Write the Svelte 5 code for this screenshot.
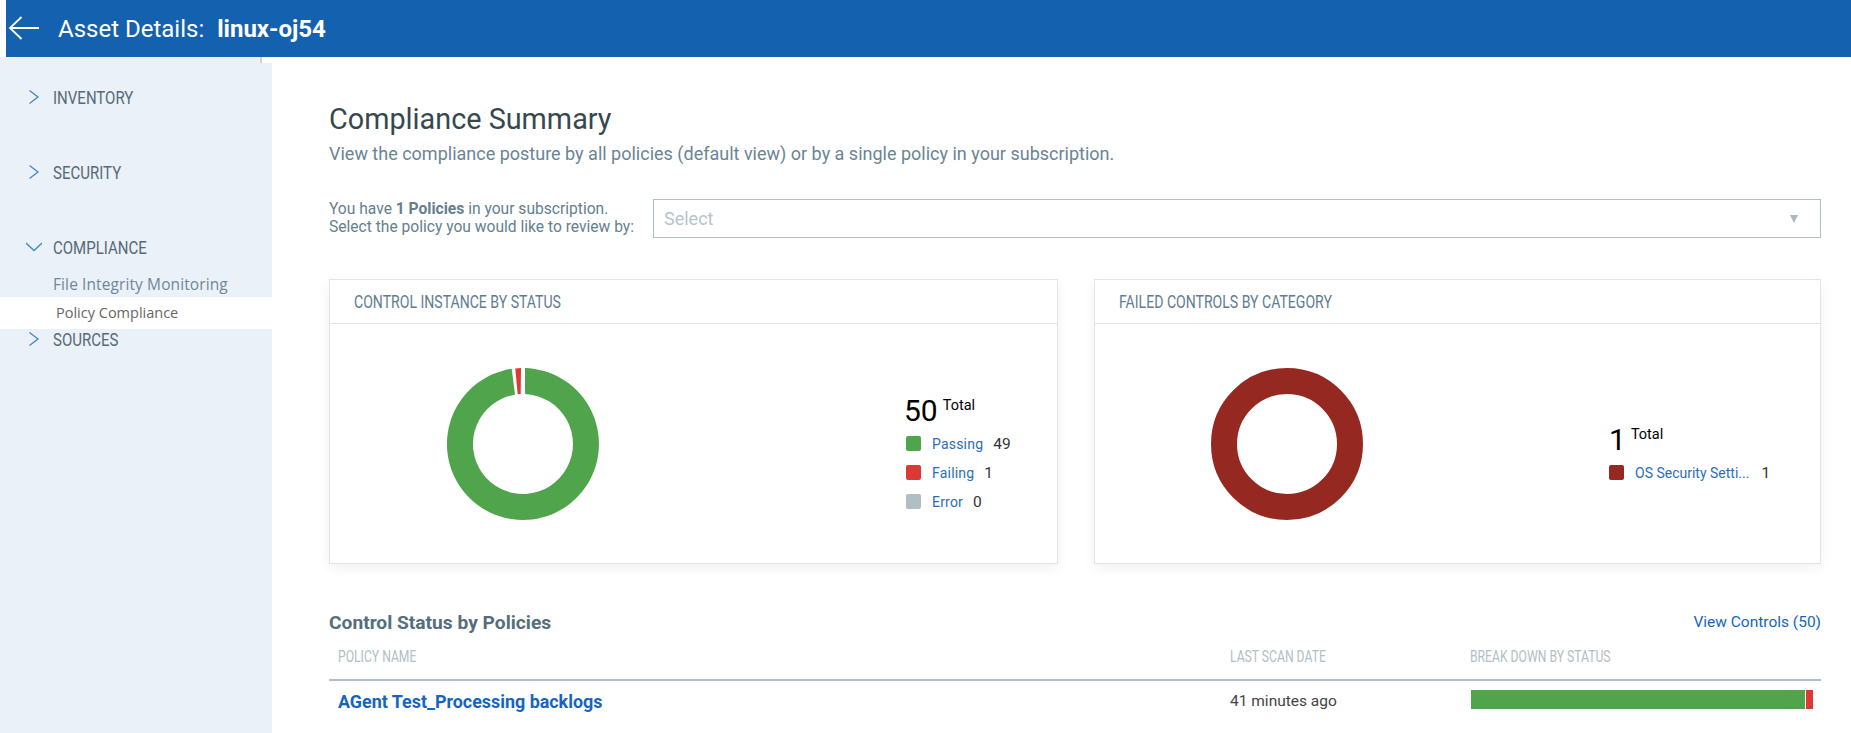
<script>
	const navTop = ['INVENTORY', 'SECURITY'];

	const statusLegend = [
		{ label: 'Passing', count: 49, color: '#50a44c' },
		{ label: 'Failing', count: 1, color: '#db3a34' },
		{ label: 'Error', count: 0, color: '#b0bec5' },
	];
	const categoryLegend = [{ label: 'OS Security Setti...', count: 1, color: '#952820' }];
</script>

{#snippet chevron(open)}
	<svg class="chevron" class:open width="16" height="16" viewBox="0 0 16 16">
		{#if open}
			<path d="M0 4 L8 11.5 L16 4" />
		{:else}
			<path d="M3.5 1.5 L12 8 L3.5 14.5" />
		{/if}
	</svg>
{/snippet}

<header class="topbar">
	<svg class="back" width="32" height="26" viewBox="0 0 32 26">
		<path d="M31 12 H2 M13.5 1 L2 12 L13.5 23" />
	</svg>
	<span class="topbar-title">Asset Details:</span>
	<span class="topbar-host">linux-oj54</span>
</header>

<div class="layout">
	<aside class="sidebar">
		<div class="grip"></div>
		{#each navTop as item}
			<div class="nav-row spaced">{@render chevron(false)}<span class="narrow">{item}</span></div>
		{/each}
		<div class="nav-row">{@render chevron(true)}<span class="narrow">COMPLIANCE</span></div>
		<div class="sub-item">File Integrity Monitoring</div>
		<div class="sub-item active">Policy Compliance</div>
		<div class="nav-row last">{@render chevron(false)}<span class="narrow">SOURCES</span></div>
	</aside>

	<main class="content">
		<h1 class="title">Compliance Summary</h1>
		<p class="subtitle">View the compliance posture by all policies (default view) or by a single policy in your subscription.</p>

		<div class="policy-select">
			<div class="policy-text">
				You have <b>1 Policies</b> in your subscription.<br />
				Select the policy you would like to review by:
			</div>
			<div class="select">
				<span>Select</span>
				<i class="caret"></i>
			</div>
		</div>

		<div class="cards">
			<section class="card">
				<h2 class="card-title"><span class="narrow">CONTROL INSTANCE BY STATUS</span></h2>
				<div class="card-body">
					<svg class="donut" width="152" height="152" viewBox="-76 -76 152 152">
						<path fill="#50a44c" d="M2 -75.97 A76 76 0 1 1 -11.3 -75.16 L-8 -49.36 A50 50 0 1 0 2 -49.96 Z" />
						<path fill="#db3a34" d="M-7.7 -75.6 A76 76 0 0 1 -2 -75.97 L-2.3 -49.9 A50 50 0 0 0 -5.3 -49.7 Z" />
					</svg>
					<div class="legend status">
						<div class="total"><span class="total-num">50</span><span class="total-label">Total</span></div>
						{#each statusLegend as row}
							<div class="legend-row">
								<i class="swatch" style:background={row.color}></i>
								<span class="legend-label">{row.label}</span>
								<span class="legend-count">{row.count}</span>
							</div>
						{/each}
					</div>
				</div>
			</section>

			<section class="card">
				<h2 class="card-title"><span class="narrow">FAILED CONTROLS BY CATEGORY</span></h2>
				<div class="card-body">
					<svg class="donut" width="152" height="152" viewBox="-76 -76 152 152">
						<circle r="63" fill="none" stroke="#952820" stroke-width="26" />
					</svg>
					<div class="legend category">
						<div class="total"><span class="total-num">1</span><span class="total-label">Total</span></div>
						{#each categoryLegend as row}
							<div class="legend-row">
								<i class="swatch" style:background={row.color}></i>
								<span class="legend-label">{row.label}</span>
								<span class="legend-count">{row.count}</span>
							</div>
						{/each}
					</div>
				</div>
			</section>
		</div>

		<div class="table-head">
			<h3 class="table-title">Control Status by Policies</h3>
			<span class="view-link">View Controls (50)</span>
		</div>
		<div class="grid columns">
			<span class="narrow first">POLICY NAME</span>
			<span class="narrow">LAST SCAN DATE</span>
			<span class="narrow">BREAK DOWN BY STATUS</span>
		</div>
		<div class="grid row">
			<span class="policy-name">AGent Test_Processing backlogs</span>
			<span class="scan-date">41 minutes ago</span>
			<div class="bar">
				<i class="bar-pass"></i>
				<i class="bar-fail"></i>
			</div>
		</div>
	</main>
</div>

<style>
	:global(body) {
		margin: 0;
		background: #fff;
		overflow: hidden;
	}
	:global(#app) {
		font-family: Roboto, sans-serif;
		height: 733px;
		overflow: hidden;
	}
	/* no Oswald here, so squeeze Roboto to the same width */
	.narrow {
		display: inline-block;
		transform: scaleX(0.8);
		transform-origin: left center;
		white-space: nowrap;
	}
	.topbar {
		display: flex;
		align-items: center;
		height: 57px;
		margin-left: 6px;
		background: #1461b0;
		color: #fff;
		font-size: 24px;
	}
	.back {
		margin-left: 2px;
		margin-right: 18px;
		fill: none;
		stroke: #fff;
		stroke-width: 1.8;
	}
	.topbar-host {
		margin-left: 13px;
		font-weight: 700;
	}
	.layout {
		display: flex;
		height: 676px;
	}
	.sidebar {
		position: relative;
		flex: 0 0 272px;
		box-sizing: border-box;
		padding-top: 25px;
		background: #ebf1f9;
	}
	.grip {
		position: absolute;
		top: 0;
		right: 0;
		width: 12px;
		height: 6px;
		background: #fff;
		border-left: 2px solid #ccd2d8;
		box-sizing: border-box;
	}
	.nav-row {
		display: flex;
		align-items: center;
		height: 30px;
		padding-left: 26px;
		gap: 11px;
		color: #566a75;
		font-size: 19px;
	}
	.nav-row .narrow {
		transform: scaleX(0.79);
	}
	.nav-row.spaced {
		margin-bottom: 45px;
	}
	.nav-row.last {
		height: 20px;
	}
	.chevron {
		flex: none;
		fill: none;
		stroke: #3f86d0;
		stroke-width: 1.3;
	}
	.sub-item {
		height: 25px;
		line-height: 25px;
		margin-top: 10px;
		padding-left: 53px;
		color: #6f8796;
		font-family: "Open Sans", sans-serif;
		font-size: 15.5px;
		letter-spacing: 0.1px;
	}
	.sub-item.active {
		height: 32px;
		line-height: 32px;
		margin-top: 0;
		padding-left: 56px;
		background: #fff;
		color: #666;
		font-size: 14.5px;
		letter-spacing: 0;
	}
	.content {
		flex: 1;
		min-width: 0;
		padding: 0 30px 0 57px;
	}
	.title {
		margin: 43px 0 0;
		font-size: 28.8px;
		font-weight: 400;
		line-height: 38px;
		color: #37474f;
	}
	.subtitle {
		margin: 5px 0 0;
		font-size: 18px;
		line-height: 22px;
		color: #6b8494;
	}
	.policy-select {
		display: flex;
		align-items: center;
		margin-top: 34px;
	}
	.policy-text {
		flex: 0 0 324px;
		margin-top: -2px;
		font-size: 15.6px;
		line-height: 18px;
		color: #64808f;
	}
	.policy-text b {
		font-weight: 700;
	}
	.select {
		flex: 1;
		display: flex;
		align-items: center;
		justify-content: space-between;
		box-sizing: border-box;
		height: 39px;
		padding: 0 22px 0 10px;
		border: 1px solid #b0bec5;
		font-size: 18px;
		color: #b7c4cc;
	}
	.caret {
		width: 0;
		height: 0;
		border-left: 4.5px solid transparent;
		border-right: 4.5px solid transparent;
		border-top: 8px solid #a9b7bf;
	}
	.cards {
		display: grid;
		grid-template-columns: 729px 727px;
		justify-content: space-between;
		margin-top: 41px;
	}
	.card {
		box-sizing: border-box;
		height: 285px;
		border: 1px solid #dfe5e9;
		box-shadow: 0 4px 12px rgba(0, 0, 0, 0.06);
	}
	.card-title {
		margin: 0;
		box-sizing: border-box;
		height: 44px;
		padding-left: 24px;
		line-height: 43px;
		border-bottom: 1px solid #e2e5e8;
		font-size: 19px;
		font-weight: 400;
		color: #5f7d8f;
	}
	.card-title .narrow {
		transform: scaleX(0.74);
	}
	.card-body {
		display: flex;
		align-items: center;
		height: 239px;
		padding-left: 117px;
	}
	.card:last-child .card-body {
		padding-left: 116px;
	}
	.legend {
		margin-top: 22px;
	}
	.legend.status {
		margin-left: 305px;
	}
	.legend.status .legend-row {
		padding-left: 2px;
	}
	.legend.category {
		margin-left: 246px;
	}
	.legend.category .legend-label {
		letter-spacing: 0;
		margin-right: 12px;
	}
	.total {
		display: flex;
		align-items: flex-start;
		gap: 5px;
		color: #000;
	}
	.total-num {
		font-size: 30px;
		line-height: 36px;
	}
	.total-label {
		font-size: 14.5px;
		line-height: 26px;
	}
	.legend-row {
		display: flex;
		align-items: center;
		height: 29px;
	}
	.swatch {
		width: 15px;
		height: 15px;
		border-radius: 2px;
		margin-right: 11px;
	}
	.legend-label {
		font-size: 14px;
		letter-spacing: 0.2px;
		color: #2a6ebb;
		margin-right: 10px;
	}
	.legend-count {
		font-size: 15.5px;
		color: #333;
	}
	.table-head {
		display: flex;
		align-items: center;
		justify-content: space-between;
		margin-top: 46px;
		height: 24px;
	}
	.table-title {
		margin: 0;
		font-size: 19.2px;
		font-weight: 700;
		color: #546e7a;
	}
	.view-link {
		font-size: 15.5px;
		color: #1565c0;
	}
	.grid {
		display: grid;
		grid-template-columns: 901px 240px 1fr;
		align-items: center;
	}
	.columns {
		height: 47px;
		box-sizing: border-box;
		border-bottom: 2px solid #b0bec5;
		font-size: 16px;
		color: #b0bec5;
	}
	.columns .narrow {
		transform: scaleX(0.76);
	}
	.columns .first,
	.policy-name {
		margin-left: 9px;
	}
	.row {
		height: 40px;
	}
	.policy-name {
		font-size: 17.9px;
		font-weight: 700;
		color: #1565c0;
	}
	.scan-date {
		font-size: 15.5px;
		color: #444;
	}
	.bar {
		display: flex;
		gap: 1px;
		height: 19px;
		margin: 0 8px 3px 1px;
	}
	.bar-pass {
		flex: 1;
		background: #50a44c;
	}
	.bar-fail {
		flex: 0 0 7px;
		background: #db3a34;
	}
</style>
